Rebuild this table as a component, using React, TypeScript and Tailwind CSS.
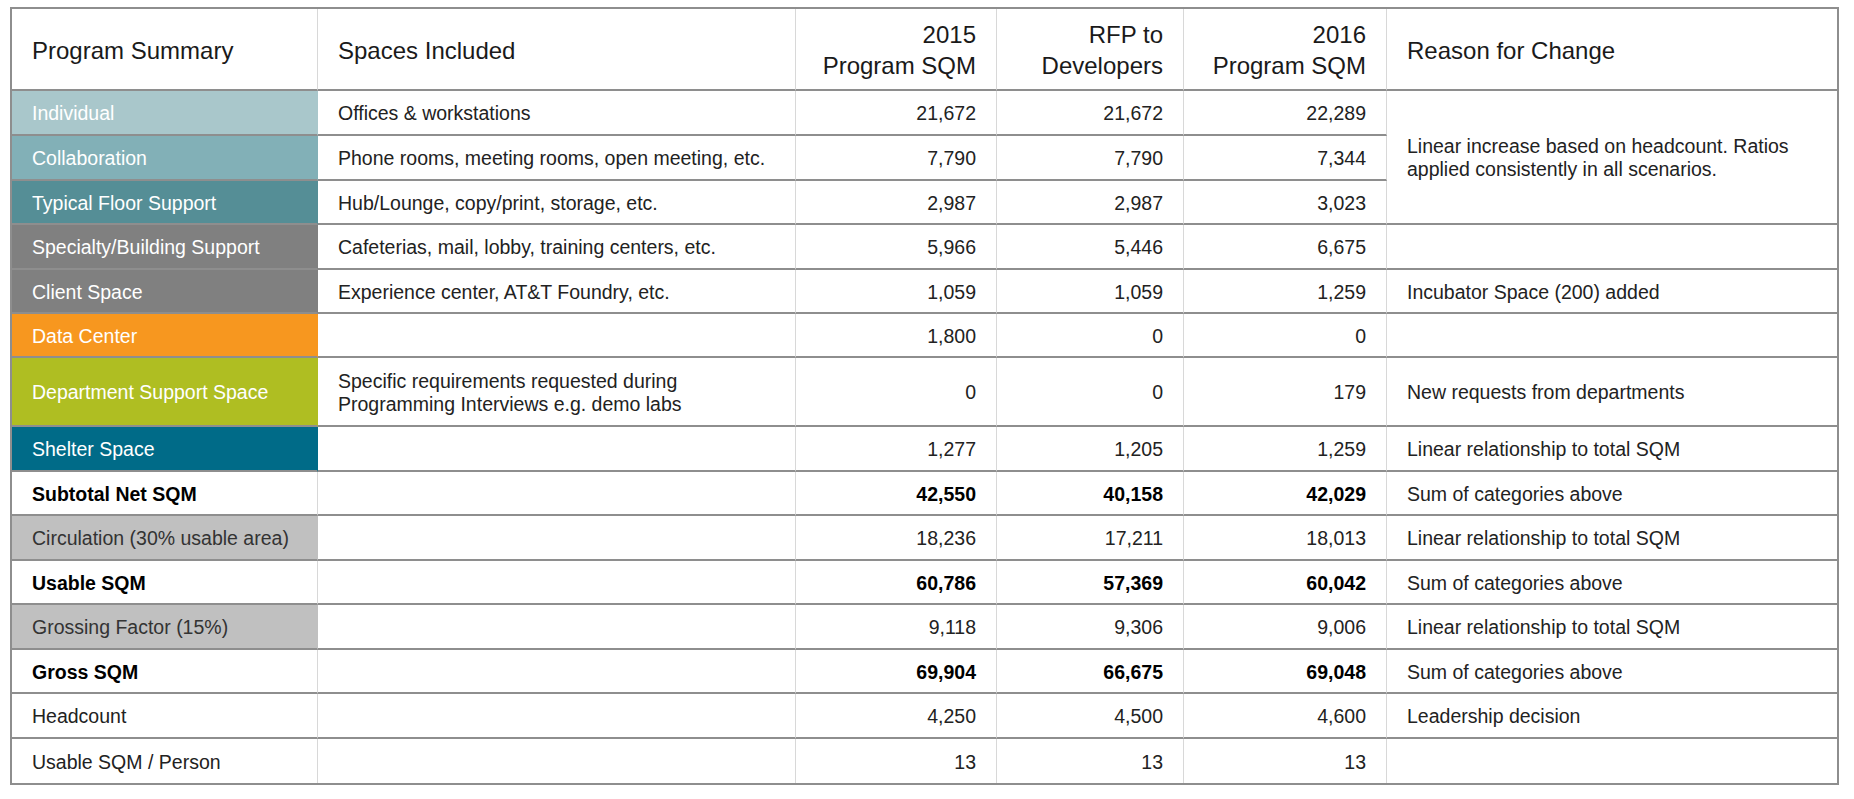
import React from 'react';

type Row = {
  label: string;
  bg?: string;
  light?: boolean;
  bold?: boolean;
  spaces?: React.ReactNode;
  v2015: string;
  rfp: string;
  v2016: string;
  reason?: React.ReactNode;
  h: string;
  merge?: 'start' | 'skip';
};

const rows: Row[] = [
  { label: 'Individual', bg: 'bg-[#a9c7cb]', light: true, spaces: 'Offices & workstations', v2015: '21,672', rfp: '21,672', v2016: '22,289', h: 'h-[45px]', merge: 'start',
    reason: (<>Linear increase based on headcount. Ratios<br />applied consistently in all scenarios.</>) },
  { label: 'Collaboration', bg: 'bg-[#82b0b7]', light: true, spaces: 'Phone rooms, meeting rooms, open meeting, etc.', v2015: '7,790', rfp: '7,790', v2016: '7,344', h: 'h-[45px]', merge: 'skip' },
  { label: 'Typical Floor Support', bg: 'bg-[#558e96]', light: true, spaces: 'Hub/Lounge, copy/print, storage, etc.', v2015: '2,987', rfp: '2,987', v2016: '3,023', h: 'h-[44px]', merge: 'skip' },
  { label: 'Specialty/Building Support', bg: 'bg-[#808080]', light: true, spaces: 'Cafeterias, mail, lobby, training centers, etc.', v2015: '5,966', rfp: '5,446', v2016: '6,675', h: 'h-[45px]' },
  { label: 'Client Space', bg: 'bg-[#808080]', light: true, spaces: 'Experience center, AT&T Foundry, etc.', v2015: '1,059', rfp: '1,059', v2016: '1,259', reason: 'Incubator Space (200) added', h: 'h-[44px]' },
  { label: 'Data Center', bg: 'bg-[#f7971f]', light: true, v2015: '1,800', rfp: '0', v2016: '0', h: 'h-[44px]' },
  { label: 'Department Support Space', bg: 'bg-[#afbe22]', light: true,
    spaces: (<>Specific requirements requested during<br />Programming Interviews e.g. demo labs</>),
    v2015: '0', rfp: '0', v2016: '179', reason: 'New requests from departments', h: 'h-[69px]' },
  { label: 'Shelter Space', bg: 'bg-[#006b88]', light: true, v2015: '1,277', rfp: '1,205', v2016: '1,259', reason: 'Linear relationship to total SQM', h: 'h-[45px]' },
  { label: 'Subtotal Net SQM', bold: true, v2015: '42,550', rfp: '40,158', v2016: '42,029', reason: 'Sum of categories above', h: 'h-[44px]' },
  { label: 'Circulation (30% usable area)', bg: 'bg-[#c0c0c0]', v2015: '18,236', rfp: '17,211', v2016: '18,013', reason: 'Linear relationship to total SQM', h: 'h-[45px]' },
  { label: 'Usable SQM', bold: true, v2015: '60,786', rfp: '57,369', v2016: '60,042', reason: 'Sum of categories above', h: 'h-[44px]' },
  { label: 'Grossing Factor (15%)', bg: 'bg-[#c0c0c0]', v2015: '9,118', rfp: '9,306', v2016: '9,006', reason: 'Linear relationship to total SQM', h: 'h-[45px]' },
  { label: 'Gross SQM', bold: true, v2015: '69,904', rfp: '66,675', v2016: '69,048', reason: 'Sum of categories above', h: 'h-[44px]' },
  { label: 'Headcount', v2015: '4,250', rfp: '4,500', v2016: '4,600', reason: 'Leadership decision', h: 'h-[45px]' },
  { label: 'Usable SQM / Person', v2015: '13', rfp: '13', v2016: '13', h: 'h-[44px]' },
];

const App = () => {
  const line = 'border-[#8e8e8e]';
  const divider = 'border-r border-r-[#d8d8d8]';

  return (
    <div className="min-h-screen bg-white pt-[7px] pl-[10px] font-['Liberation_Sans',Arial,sans-serif] text-[#222222]">
      <div className={`w-[1829px] border-2 ${line}`}>
        <table className="w-full table-fixed border-separate border-spacing-0">
          <colgroup>
            <col className="w-[306px]" />
            <col className="w-[478px]" />
            <col className="w-[201px]" />
            <col className="w-[187px]" />
            <col className="w-[203px]" />
            <col />
          </colgroup>
          <thead>
            <tr className="h-[82px] text-[24px] leading-[31px] text-[#1a1a1a]">
              <th className={`border-b-2 ${line} ${divider} pl-[20px] pt-[2px] text-left font-normal`}>Program Summary</th>
              <th className={`border-b-2 ${line} ${divider} pl-[20px] pt-[2px] text-left font-normal`}>Spaces Included</th>
              <th className={`border-b-2 ${line} ${divider} pr-[20px] pt-[2px] text-right font-normal`}>2015<br />Program SQM</th>
              <th className={`border-b-2 ${line} ${divider} pr-[20px] pt-[2px] text-right font-normal`}>RFP to<br />Developers</th>
              <th className={`border-b-2 ${line} ${divider} pr-[20px] pt-[2px] text-right font-normal`}>2016<br />Program SQM</th>
              <th className={`border-b-2 ${line} pl-[20px] pt-[2px] text-left font-normal`}>Reason for Change</th>
            </tr>
          </thead>
          <tbody className="text-[19.5px] leading-[23px]">
            {rows.map((r, i) => {
              const last = i === rows.length - 1;
              const bottom = last ? '' : `border-b-2 ${line}`;
              const weight = r.bold ? 'font-bold text-black' : '';
              const labelColor = r.light ? 'text-white' : r.bg ? 'text-[#333333]' : '';
              return (
                <tr key={r.label} className={r.h}>
                  <td className={`${bottom} ${r.bg ?? ''} ${r.bg ? 'border-r border-r-transparent' : divider} pl-[20px] pt-[2px] ${labelColor} ${weight}`}>
                    {r.label}
                  </td>
                  <td className={`${bottom} ${divider} pl-[20px] pt-[2px]`}>{r.spaces}</td>
                  <td className={`${bottom} ${divider} pr-[20px] pt-[2px] text-right ${weight}`}>{r.v2015}</td>
                  <td className={`${bottom} ${divider} pr-[20px] pt-[2px] text-right ${weight}`}>{r.rfp}</td>
                  <td className={`${bottom} ${divider} pr-[20px] pt-[2px] text-right ${weight}`}>{r.v2016}</td>
                  {r.merge === 'skip' ? null : (
                    <td
                      rowSpan={r.merge === 'start' ? 3 : 1}
                      className={`${bottom} pl-[20px] pr-4 pt-[2px] align-middle`}
                    >
                      {r.reason}
                    </td>
                  )}
                </tr>
              );
            })}
          </tbody>
        </table>
      </div>
    </div>
  );
};

export default App;
